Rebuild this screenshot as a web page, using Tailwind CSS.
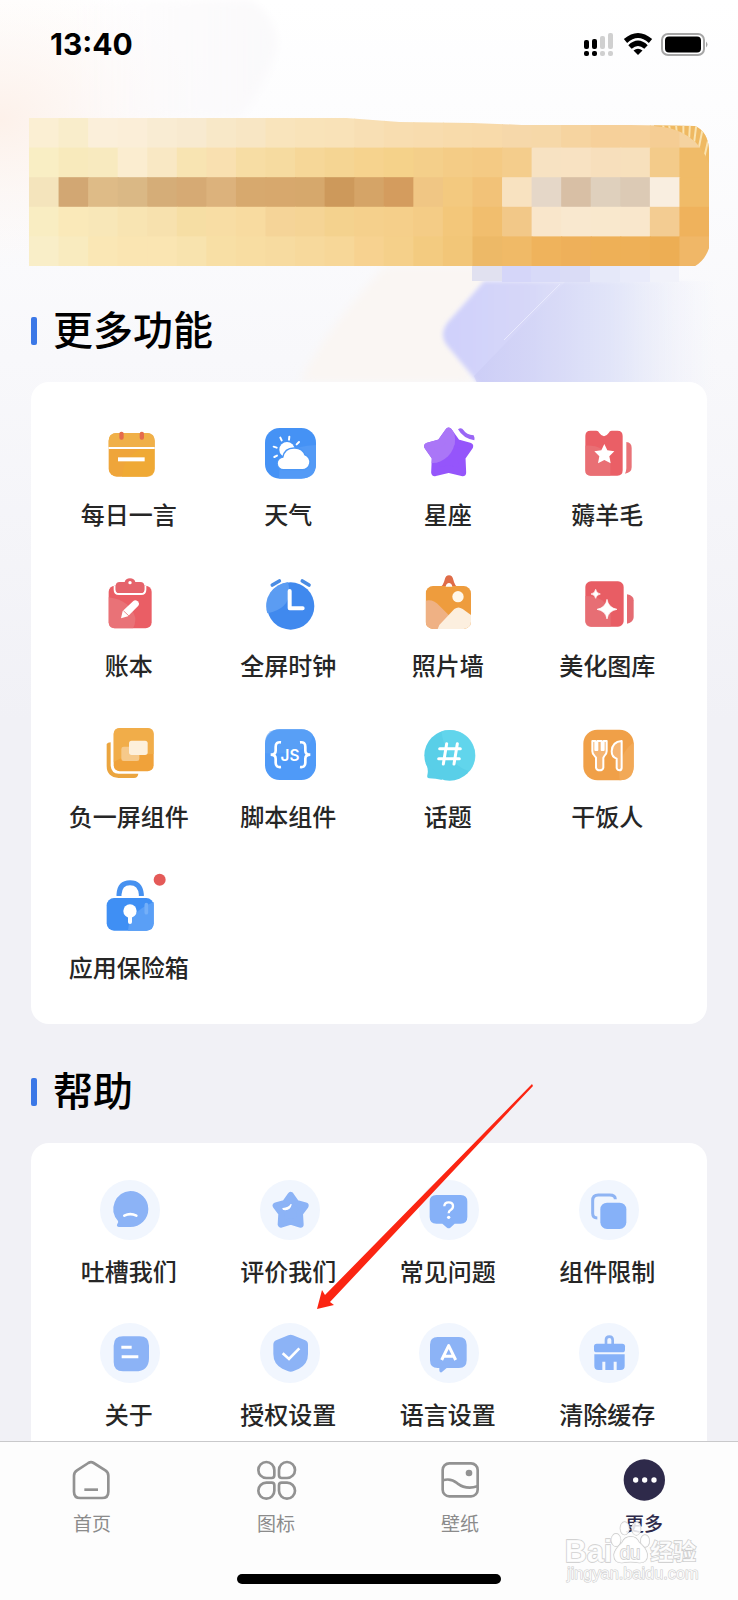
<!DOCTYPE html>
<html lang="zh-CN">
<head>
    <meta charset="UTF-8" />
    <meta name="viewport" content="width=device-width, initial-scale=1.0" />
    <script src="https://cdn.jsdelivr.net/npm/@tailwindcss/browser@4"></script>
    <title>更多</title>
</head>
<body class="relative h-screen flex flex-col overflow-hidden bg-[#f1f1f6] font-['Noto_Sans_CJK_SC',sans-serif] text-[#262626]">
    <main class="relative flex-1 min-h-0 overflow-y-auto [scrollbar-width:none] bg-linear-to-b from-white via-[#f8f8fb] via-25% to-[#f1f1f6] to-50%">

        <!-- background shapes -->
        <svg class="absolute top-0 left-0 w-full h-[420px]" viewBox="0 0 738 420" preserveAspectRatio="none" aria-hidden="true">
            <defs>
                <radialGradient id="bgPeach"><stop offset="0" stop-color="#fdf1ea"/><stop offset="1" stop-color="#fdf6f2" stop-opacity="0"/></radialGradient>
                <linearGradient id="bgLilac" x1="0" x2="1"><stop offset="0" stop-color="#fbf8fa" stop-opacity="0"/><stop offset="1" stop-color="#faf9fb"/></linearGradient>
                <linearGradient id="bgBlue" x1="0" x2="1"><stop offset="0" stop-color="#cfd0fb"/><stop offset=".3" stop-color="#d6d7f8"/><stop offset=".6" stop-color="#e4e7f9"/><stop offset="1" stop-color="#f6f7fb" stop-opacity="0"/></linearGradient>
                <linearGradient id="bgDeep" x1="0" x2="1"><stop offset="0" stop-color="#c9caf4"/><stop offset=".6" stop-color="#dfe3f8" stop-opacity=".7"/><stop offset="1" stop-color="#f0f2fa" stop-opacity="0"/></linearGradient>
                <filter id="soft"><feGaussianBlur stdDeviation="2"/></filter>
                <filter id="softer"><feGaussianBlur stdDeviation="5"/></filter>
            </defs>
            <ellipse cx="0" cy="120" rx="200" ry="150" fill="url(#bgPeach)"/>
            <path d="M60 0H250Q275 15 277 45Q270 80 240 118H60z" fill="url(#bgLilac)" filter="url(#softer)"/>
            <path d="M385 266H500L445 330L475 382H300Q325 330 385 266z" fill="#faf6f3" filter="url(#softer)"/>
            <path d="M484 281Q466 302 448 322Q437 336 450 349L484 390H720V281z" fill="url(#bgBlue)" filter="url(#soft)"/>
            <path d="M566 281L474 376L480 390H720V281z" fill="url(#bgDeep)" opacity=".6"/>
            <path d="M560 284L504 340" stroke="#e9eafd"/>
            <g>
                <rect x="472" y="265" width="30" height="16" fill="#e1e1f0"/>
                <rect x="502" y="265" width="29" height="17" fill="#d5d6f9"/>
                <rect x="531" y="265" width="29" height="17" fill="#d8daf8"/>
                <rect x="560" y="265" width="30" height="17" fill="#dadcf6"/>
                <rect x="590" y="265" width="30" height="17" fill="#e5e8f9"/>
                <rect x="620" y="265" width="30" height="17" fill="#e9ebfa"/>
                <rect x="650" y="265" width="29" height="17" fill="#f1f2fa"/>
            </g>
        </svg>

        <!-- status bar -->
        <header class="relative h-[118px] pl-[50px] pr-[30px] flex justify-between items-start">
            <time class="mt-[26px] font-['Inter',sans-serif] font-bold text-[30px] leading-9 text-black">13:40</time>
            <svg class="mt-[30px] w-[126px] h-[28px]" viewBox="0 0 126 28" role="img" aria-label="信号 Wi-Fi 电池">
                <rect x="2" y="10" width="5" height="9" rx="2"/>
                <rect x="10" y="9" width="5" height="10" rx="2"/>
                <rect x="18" y="6" width="5" height="13" rx="2" fill="#d0d0d0"/>
                <rect x="26" y="3" width="5" height="16" rx="2" fill="#d0d0d0"/>
                <rect x="2" y="21" width="5" height="5" rx="2"/>
                <rect x="10" y="21" width="5" height="5" rx="2"/>
                <rect x="18" y="21" width="5" height="5" rx="2" fill="#d0d0d0"/>
                <rect x="26" y="21" width="5" height="5" rx="2" fill="#d0d0d0"/>
                <g fill="none" stroke="#000" stroke-width="5">
                    <path d="M43.500 11Q56 0 68.500 11"/>
                    <path d="M48 17Q56 9.500 64 17"/>
                </g>
                <path d="M51.500 20.500Q56 17 60.500 20.500L56 25z"/>
                <rect x="80" y="4" width="42" height="21" rx="6" fill="none" stroke="#a6a6a6" stroke-width="2"/>
                <rect x="83" y="6.500" width="36" height="16" rx="4"/>
                <path d="M124 11.500q3 3 0 6z" fill="#a6a6a6"/>
            </svg>
        </header>

        <!-- banner -->
        <svg class="relative block ml-[29px] mr-[29px] w-[calc(100%-58px)] h-[148px]" viewBox="0 0 690 150" preserveAspectRatio="none" aria-hidden="true">
            <defs>
                <clipPath id="bannerClip"><path d="M0 0H322L376 4L450 5L500 7L610 7L676 8Q689 14 690 32V132Q686 144 676 150H0z"/></clipPath>
                <clipPath id="hatchClip"><path d="M634 0H690V46Q676 10 634 8z"/></clipPath>
            </defs>
            <g clip-path="url(#bannerClip)">
                <g id="mosaic"></g>
                <g clip-path="url(#hatchClip)">
                    <rect x="634" width="56" height="50" fill="#efb962"/>
                    <path d="M640 0l6 14M648 0l4 20M656 0l2 24M664 0l0 30M671 0l-2 36M678 0l-5 40M685 4l-9 44M692 10l-10 44" stroke="#fae3b0" stroke-width="2" fill="none"/>
                </g>
            </g>
        </svg>

        <section class="relative">
            <h2 class="mt-8 mb-6 pl-[31px] flex items-end gap-4 text-[40px] leading-[60px] font-medium text-black">
                <span class="mb-[13px] w-1.5 h-7 rounded-xs bg-[#3b78e7]"></span>更多功能
            </h2>
            <div class="mx-[31px] pt-[41px] pb-[39px] pl-[18px] pr-5 grid grid-cols-4 gap-y-[42px] rounded-[18px] bg-white text-2xl leading-9 font-medium">
                <a href="#" class="flex flex-col items-center gap-[13px]">
                    <svg class="ml-[3px] size-[60px]" viewBox="121 39 180 180">
                        <rect x="147" y="69" width="138" height="131" rx="24" fill="#efa53a"/>
                        <path d="M147 111V92q0-23 24-23h90q24 0 24 23v19z" fill="#f0b048"/>
                        <path d="M285 117v60q0 23-24 23h-74q4-65 60-83z" fill="#f0ab33" opacity=".7"/>
                        <path d="M147 114H285" stroke="#fff" stroke-width="6"/>
                        <rect x="179" y="65" width="13" height="24" rx="6" fill="#e56b4c"/>
                        <rect x="240" y="65" width="13" height="24" rx="6" fill="#e56b4c"/>
                        <path d="M175 148H255" stroke="#fff" stroke-width="12"/>
                    </svg>
                    每日一言
                </a>
                <a href="#" class="flex flex-col items-center gap-[13px]">
                    <svg class="ml-[3px] size-[60px]" viewBox="599 39 180 180">
                        <rect x="614" y="54" width="153" height="152" rx="44" fill="#4592f5"/>
                        <path d="M656 205q-2-98 111-100v56q0 44-44 44z" fill="#539af6"/>
                        <circle cx="680" cy="119" r="23" fill="#fff"/>
                        <path d="M660 83l4 8M687 80l-1 9M716 96l-7 7M640 110l9 3M642 141l8-4" stroke="#fff" stroke-width="6" stroke-linecap="round"/>
                        <path d="M670 177a17 17 0 0 1-1-34q5-28 34-27q23 1 29 20a21 21 0 0 1-7 41z" fill="#fff" stroke="#4c97f5" stroke-width="8" paint-order="stroke"/>
                    </svg>
                    天气
                </a>
                <a href="#" class="flex flex-col items-center gap-[13px]">
                    <svg class="ml-[3px] size-[60px]" viewBox="88 39 180 180">
                        <defs>
                            <path id="star" d="M177 65L201 99L239 109L216 142L218 187L177 177L136 187L138 142L115 109L153 99z"/>
                            <clipPath id="starGlow"><circle cx="124" cy="88" r="72"/></clipPath>
                        </defs>
                        <use href="#star" fill="#9555fb" stroke="#9555fb" stroke-width="23" stroke-linejoin="round"/>
                        <g clip-path="url(#starGlow)"><use href="#star" fill="#aa76f7" stroke="#aa76f7" stroke-width="23" stroke-linejoin="round"/></g>
                        <path d="M205 58q10-8 17 3q8 14 30 15q4 8 2 15q-34-6-49-33z" fill="#9a66f5" stroke="#fff" stroke-width="7" paint-order="stroke"/>
                    </svg>
                    星座
                </a>
                <a href="#" class="flex flex-col items-center gap-[13px]">
                    <svg class="ml-[3px] size-[60px]" viewBox="566 39 180 180">
                        <path d="M601 62h17q6 0 9 7q14 20 28 0q3-7 9-7h17q16 0 16 16v103q0 16-16 16h-80q-16 0-16-16V78q0-16 16-16z" fill="#ea5f66"/>
                        <path d="M585 107q55-3 75 41v49h-59q-16 0-16-16z" fill="#e8747a" opacity=".75"/>
                        <path d="M642 102l9 19l21 3l-15 15l4 21l-19-10l-19 10l4-21l-15-15l21-3z" fill="#fff"/>
                        <path d="M708 96q16 2 16 18v58q0 16-20 19q4-7 4-16z" fill="#e97378"/>
                    </svg>
                    薅羊毛
                </a>
                <a href="#" class="flex flex-col items-center gap-[13px]">
                    <svg class="ml-[3px] size-[60px]" viewBox="121 492 180 180">
                        <rect x="147" y="527" width="129" height="128" rx="18" fill="#ea5e65"/>
                        <path d="M147 562q65 8 80 62q0 20-7 31h-55q-18 0-18-18z" fill="#e9777c" opacity=".8"/>
                        <path d="M165 527v12q0 13 13 13h66q13 0 13-13v-12" fill="#e5636b" stroke="#fff" stroke-width="6"/>
                        <path d="M168 528q0-12 12-12h15q3-11 16-11t16 11h15q12 0 12 12v10q0 10-10 10h-66q-10 0-10-10z" fill="#e5636b"/>
                        <circle cx="211" cy="518" r="5" fill="#fff"/>
                        <path d="M184 625l5-22l32-30q6-5 13 1q7 7 2 13l-31 32z" fill="#fff"/>
                        <path d="M191 602l17 16" stroke="#ec8c90" stroke-width="3"/>
                    </svg>
                    账本
                </a>
                <a href="#" class="flex flex-col items-center gap-[13px]">
                    <svg class="ml-[3px] size-[60px]" viewBox="599 492 180 180">
                        <circle cx="691" cy="588" r="71" fill="#4089ee"/>
                        <path d="M621 610a71 71 0 0 1 62-93q20 76-62 93z" fill="#5b9cf2"/>
                        <path d="M636 525l21-12M726 513l20 12" stroke="#4a8ce3" stroke-width="11" stroke-linecap="round"/>
                        <path d="M688 543V595H727" fill="none" stroke="#fff" stroke-width="12" stroke-linecap="round" stroke-linejoin="round"/>
                    </svg>
                    全屏时钟
                </a>
                <a href="#" class="flex flex-col items-center gap-[13px]">
                    <svg class="ml-[3px] size-[60px]" viewBox="88 492 180 180">
                        <defs><clipPath id="photoClip"><rect x="108" y="528" width="136" height="129" rx="22"/></clipPath></defs>
                        <path d="M150 531q11-4 15-22q3-13 13-13t13 13q4 18 14 22z" fill="#df6c48"/>
                        <g clip-path="url(#photoClip)">
                            <rect x="108" y="528" width="136" height="129" fill="#ee9c3d"/>
                            <path d="M108 572q24-5 42 16l30 30l-30 40h-42z" fill="#efb184"/>
                            <path d="M144 657l5-12l45-48q12-9 25 0l26 19v41z" fill="#fcefdf"/>
                        </g>
                        <path d="M168 530q2-11 10-11t10 11z" fill="#fff"/>
                        <circle cx="205" cy="560" r="17" fill="#fff7ea"/>
                    </svg>
                    照片墙
                </a>
                <a href="#" class="flex flex-col items-center gap-[13px]">
                    <svg class="ml-[3px] size-[60px]" viewBox="566 492 180 180">
                        <rect x="585" y="514" width="115" height="136" rx="17" fill="#e85d64"/>
                        <path d="M585 558q62 0 76 52v40h-59q-17 0-17-17z" fill="#e7747a" opacity=".75"/>
                        <path d="M650 568q4 25 30 30q-26 5-30 29q-4-24-30-29q26-5 30-30zM616 538q2 12 14 14q-12 2-14 13q-2-11-14-13q12-2 14-14z" fill="#fff" stroke="#fff" stroke-width="2"/>
                        <path d="M710 553q20 4 20 18v50q0 16-20 20z" fill="#e56b72"/>
                    </svg>
                    美化图库
                </a>
                <a href="#" class="flex flex-col items-center gap-[13px]">
                    <svg class="ml-[3px] size-[60px]" viewBox="121 45 180 180">
                        <path d="M141 102q3-5 12-5v70q2 23 24 24h59q-2 13-13 13h-46q-36-3-36-36z" fill="#eba53f"/>
                        <rect x="162" y="54" width="120" height="130" rx="18" fill="#f0a23a"/>
                        <path d="M180 54h84q18 0 18 18v60q-90 0-120 25V72q0-18 18-18z" fill="#f1b04e" opacity=".8"/>
                        <rect x="185" y="110" width="54" height="43" rx="7" fill="#f6c98a"/>
                        <rect x="208" y="92" width="56" height="43" rx="8" fill="#fdf0dc"/>
                    </svg>
                    负一屏组件
                </a>
                <a href="#" class="flex flex-col items-center gap-[13px]">
                    <svg class="ml-[3px] size-[60px]" viewBox="599 45 180 180">
                        <rect x="614" y="58" width="153" height="152" rx="44" fill="#4f9af8"/>
                        <path d="M614 102q0-44 44-44h65q22 0 34 15q-3 65-143 57z" fill="#5ca1f5" opacity=".7"/>
                        <path d="M662 97q-16-2-16 13v12q0 12-15 12q15 0 15 12v12q0 15 16 13M719 97q16-2 16 13v12q0 12 15 12q-15 0-15 12v12q0 15-16 13" fill="none" stroke="#fff" stroke-width="8"/>
                        <text x="689" y="152" text-anchor="middle" font-family="Inter, sans-serif" font-weight="600" font-size="46" fill="#fff">JS</text>
                    </svg>
                    脚本组件
                </a>
                <a href="#" class="flex flex-col items-center gap-[13px]">
                    <svg class="ml-[3px] size-[60px]" viewBox="88 45 180 180">
                        <circle cx="180" cy="136" r="76" fill="#59cfe8"/>
                        <path d="M106 150q12 26 7 46q-2 9 5 9q20 0 40 5z" fill="#59cfe8"/>
                        <path d="M180 60a76 76 0 0 1 60 124q-70-20-85-120q12-4 25-4z" fill="#63d6ec" opacity=".8"/>
                        <path d="M171 101L161 162M203 101L193 162M150 116H212M147 146H209" stroke="#fff" stroke-width="9" stroke-linecap="round"/>
                    </svg>
                    话题
                </a>
                <a href="#" class="flex flex-col items-center gap-[13px]">
                    <svg class="ml-[3px] size-[60px]" viewBox="566 45 180 180">
                        <rect x="579" y="59" width="151" height="152" rx="42" fill="#f0a048"/>
                        <path d="M688 211q-8-76 42-114v72q0 42-42 42z" fill="#f2a957"/>
                        <path d="M606 93h9v27h6V93h13v27h6V93h9v31q0 9-7 14l-3 5v30q-2 8-11 8t-11-8v-30l-4-5q-7-5-7-14zM694 93q-29 2-30 31q0 17 15 22v28q2 7 8 7t7-7z" fill="#f5b573" stroke="#fff" stroke-width="6" stroke-linejoin="round"/>
                    </svg>
                    干饭人
                </a>
                <a href="#" class="flex flex-col items-center gap-[13px]">
                    <svg class="ml-[3px] size-[60px] overflow-visible" viewBox="121 498 180 180">
                        <path d="M178 558v-5q2-35 33-35t34 35v5" fill="none" stroke="#4691f0" stroke-width="15"/>
                        <rect x="141" y="564" width="141" height="98" rx="22" fill="#3f8ff4"/>
                        <path d="M205 662q2-55 77-86v64q0 22-22 22z" fill="#5a9ff6"/>
                        <path d="M260 584v24" stroke="#74aff8" stroke-width="11" stroke-linecap="round"/>
                        <circle cx="211" cy="603" r="20" fill="#fff"/>
                        <path d="M211 610v26" stroke="#fff" stroke-width="12" stroke-linecap="round"/>
                        <circle cx="300" cy="509" r="18" fill="#e45a58"/>
                    </svg>
                    应用保险箱
                </a>
            </div>
        </section>

        <section class="relative pt-[35px]">
            <h2 class="mb-6 pl-[31px] flex items-end gap-4 text-[40px] leading-[60px] font-medium text-black">
                <span class="mb-[13px] w-1.5 h-7 rounded-xs bg-[#3b78e7]"></span>帮助
            </h2>
            <div class="mx-[31px] pt-[37px] pb-[39px] pl-[18px] pr-5 grid grid-cols-4 gap-y-[34px] rounded-[18px] bg-white text-2xl leading-9 font-medium">
                <a href="#" class="flex flex-col items-center gap-[13px]">
                    <svg class="ml-[3px] size-[60px] rounded-full bg-[#f1f6fe]" viewBox="121 60 180 180">
                        <path d="M212 93a54 54 0 0 1 0 108h-35q-8-2-4-9q4-6 2-9A54 54 0 0 1 212 93z" fill="#8cb3f6"/>
                        <path d="M194 167q18-9 36 0" fill="none" stroke="#fff" stroke-width="8" stroke-linecap="round"/>
                    </svg>
                    吐槽我们
                </a>
                <a href="#" class="flex flex-col items-center gap-[13px]">
                    <svg class="ml-[3px] size-[60px] rounded-full bg-[#f1f6fe]" viewBox="599 60 180 180">
                        <path d="M691 106L708 130L735 137L718 160L720 193L691 184L662 193L664 160L647 137L674 130z" fill="#8cb3f6" stroke="#8cb3f6" stroke-width="20" stroke-linejoin="round"/>
                        <path d="M668 146q18-1 24-12q-3 14-17 15q-6 0-7-3z" fill="#fff" stroke="#fff" stroke-width="4" stroke-linejoin="round"/>
                    </svg>
                    评价我们
                </a>
                <a href="#" class="flex flex-col items-center gap-[13px]">
                    <svg class="ml-[3px] size-[60px] rounded-full bg-[#f1f6fe]" viewBox="88 60 180 180">
                        <path d="M140 105h73q20 0 20 20v46q0 20-20 20h-18l-13 12q-5 3-10 0l-14-12h-18q-20 0-20-20v-46q0-20 20-20z" fill="#86b1f8"/>
                        <path d="M164 139q0-12 13-12t13 11q0 8-7 12q-6 3-6 10" fill="none" stroke="#fff" stroke-width="7"/>
                        <circle cx="177" cy="172" r="5" fill="#fff"/>
                    </svg>
                    常见问题
                </a>
                <a href="#" class="flex flex-col items-center gap-[13px]">
                    <svg class="ml-[3px] size-[60px] rounded-full bg-[#f1f6fe]" viewBox="566 60 180 180">
                        <path d="M621 174q-14 0-14-14v-38q0-17 17-17h34q17 0 17 13" fill="none" stroke="#8fb4f3" stroke-width="9"/>
                        <rect x="630" y="128" width="78" height="79" rx="20" fill="#86b1f8"/>
                    </svg>
                    组件限制
                </a>
                <a href="#" class="flex flex-col items-center gap-[13px]">
                    <svg class="ml-[3px] size-[60px] rounded-full bg-[#f1f6fe]" viewBox="121 489 180 180">
                        <path d="M190 529h50q28 0 28 28v36q0 41-41 41h-37q-28 0-28-28v-49q0-28 28-28z" fill="#8cb3f6"/>
                        <path d="M185 562h31M186 590h50" stroke="#fff" stroke-width="9"/>
                    </svg>
                    关于
                </a>
                <a href="#" class="flex flex-col items-center gap-[13px]">
                    <svg class="ml-[3px] size-[60px] rounded-full bg-[#f1f6fe]" viewBox="599 489 180 180">
                        <path d="M684 526q7-4 14 0l35 14q10 4 10 14v28q0 30-27 44l-16 7q-9 4-18 0l-16-7q-27-14-27-44v-28q0-10 10-14z" fill="#8cb3f6"/>
                        <path d="M667 580l19 17l31-32" fill="none" stroke="#fff" stroke-width="8"/>
                    </svg>
                    授权设置
                </a>
                <a href="#" class="flex flex-col items-center gap-[13px]">
                    <svg class="ml-[3px] size-[60px] rounded-full bg-[#f1f6fe]" viewBox="88 489 180 180">
                        <path d="M144 531h64q23 0 23 23v47q0 23-23 23h-37l-15 13q-7 2-7-6v-7h-5q-23 0-23-23v-47q0-23 23-23z" fill="#8cb3f6"/>
                        <path d="M156 600l21-43l21 43M164 589h26" fill="none" stroke="#fff" stroke-width="9" stroke-linejoin="round"/>
                    </svg>
                    语言设置
                </a>
                <a href="#" class="flex flex-col items-center gap-[13px]">
                    <svg class="ml-[3px] size-[60px] rounded-full bg-[#f1f6fe]" viewBox="566 489 180 180">
                        <path d="M647 555v-15q0-10 10-10t10 10v15" fill="none" stroke="#8fb4f3" stroke-width="8"/>
                        <rect x="611" y="551" width="93" height="26" rx="8" fill="#86b1f8"/>
                        <path d="M612 583h91v35q0 12-12 12h-12v-25h-9v25h-25v-25h-9v25h-12q-12 0-12-12z" fill="#86b1f8"/>
                    </svg>
                    清除缓存
                </a>
            </div>
            <!-- pointer to the permission entry -->
            <svg class="absolute left-[315px] top-[60px] w-[220px] h-[228px] pointer-events-none" viewBox="315 1084 220 228" aria-hidden="true">
                <path d="M317 1309L322 1290L325 1295L532 1084L533 1086L330 1302L334 1305z" fill="#fb2512"/>
            </svg>
        </section>
    </main>

    <nav class="relative border-t border-[#c9c9cb] bg-[#fdfdfd] pt-[17px] pb-4">
        <div class="pr-0.5 grid grid-cols-4 text-[19px] leading-7 text-[#8b8b8b]">
            <a href="#" class="flex flex-col items-center gap-2">
                <svg class="size-[42px]" viewBox="213 87 126 126" fill="none" stroke="#929292" stroke-width="8">
                    <path d="M265 99q8-5 16 0l35 22q9 6 9 16v48q0 19-19 19h-65q-19 0-19-19v-48q0-10 9-16z"/>
                    <path d="M253 179h41"/>
                </svg>
                首页
            </a>
            <a href="#" class="flex flex-col items-center gap-2">
                <svg class="size-[42px]" viewBox="765 87 126 126" fill="none" stroke="#929292" stroke-width="8">
                    <path d="M799 96a24 24 0 0 1 24 24v16q0 8-8 8h-16a24 24 0 0 1 0-48z"/>
                    <path d="M861 96a24 24 0 0 0-24 24v16q0 8 8 8h16a24 24 0 0 0 0-48z"/>
                    <path d="M799 206a24 24 0 0 0 24-24v-16q0-8-8-8h-16a24 24 0 0 0 0 48z"/>
                    <path d="M861 206a24 24 0 0 1-24-24v-16q0-8 8-8h16a24 24 0 0 1 0 48z"/>
                </svg>
                图标
            </a>
            <a href="#" class="flex flex-col items-center gap-2">
                <svg class="size-[42px]" viewBox="213 87 126 126" fill="none" stroke="#929292" stroke-width="8">
                    <rect x="224" y="100" width="105" height="99" rx="20"/>
                    <path d="M225 151q23-8 43 9q26 20 60 9"/>
                    <circle cx="303" cy="129" r="10" fill="#929292" stroke="none"/>
                </svg>
                壁纸
            </a>
            <a href="#" class="flex flex-col items-center gap-2 font-medium text-[#2e2a4a]" aria-current="page">
                <svg class="size-[42px]" viewBox="765 87 126 126">
                    <circle cx="829" cy="150" r="62" fill="#2e2a4a"/>
                    <g fill="#fff"><circle cx="803" cy="150" r="8"/><circle cx="830" cy="150" r="8"/><circle cx="858" cy="150" r="8"/></g>
                </svg>
                更多
            </a>
        </div>
        <div class="mt-[37px] mx-auto w-[264px] h-2.5 rounded-full bg-black"></div>

        <!-- watermark -->
        <svg class="absolute right-[35px] bottom-3 w-[140px] h-[68px] pointer-events-none" viewBox="585 270 420 204" fill="#fff" fill-opacity=".85" stroke="#cbcbcb" stroke-width="4" paint-order="stroke" role="img" aria-label="Baidu 经验">
            <text x="590" y="396" font-family="Liberation Sans, sans-serif" font-weight="bold" font-size="92">Bai</text>
            <ellipse cx="744" cy="330" rx="14" ry="19"/>
            <ellipse cx="770" cy="295" rx="13" ry="19"/>
            <ellipse cx="805" cy="296" rx="13" ry="19"/>
            <ellipse cx="831" cy="333" rx="13" ry="18"/>
            <path d="M788 320q18 0 25 17q22 18 25 37q0 25-24 24q-26-5-52 0q-24 1-24-24q2-16 24-36q8-18 26-18z"/>
            <text x="755" y="388" font-family="Liberation Sans, sans-serif" font-size="56">du</text>
            <text x="847" y="389" font-family="Noto Sans CJK SC, sans-serif" font-weight="bold" font-size="69">经验</text>
            <text x="597" y="446" font-family="Liberation Sans, sans-serif" font-size="49" stroke-width="3">jingyan.baidu.com</text>
        </svg>
    </nav>

    <script>
        // banner tiles, one list of colours per row
        const tiles = [
            "fbefd3 f9edcb fbefda fbeed8 f9ecd3 f8ead0 f8e8c8 f8e6c4 f9e4bc f9e3b9 f9e2b8 f8dfb4 f8ddb0 f8dcae f8dbab f8daaa f6d8aa f6d8a8 f6d4a0 f6d09a f6d09a f5cd94 f5d3a0",
            "f9eec4 f8eabc f8eabf fbedd0 f9e8c4 f8e4b2 f9e0b0 f7dda4 f6dba0 f6d798 f5d593 f6d38e f5d28a f4cf8a f4cc86 f4ca84 f4cd8c f7e2c2 f8e2c2 f7dfbc f7e0bc f3cb8a f0bb68",
            "f4e4bc d2a773 debb87 dab885 d5ad78 d6aa74 dcb27c d7a96e d7a86d d6a86c cd995b d5a467 d49c5e f0c684 f3c97f f2c278 f8e2c0 e5d7c8 d8bfa5 dfd0bd dccab5 f9eee0 f0bb68",
            "f9edc2 fae9b9 f8e7b8 f8e4b2 f7e1ae f6dea4 f8dda4 f8dba0 f5d498 f5d495 f4d28e f5d08c f5cf8a f4cc86 f3c77a f1be6e f2c888 f9e6cb f9e8cf f9e8cd f9e7cc f3cc92 efb25c",
            "f9eec8 f9ebbf fae7b5 fae5b2 fae5b2 f8e3ae f8dfa5 f8dda2 f7dba0 f7d99c f7d798 f7d290 f5d08a f3cb80 f2c678 edb967 f0ba67 efb35c eeb05a eeb057 eeb057 edae54 f0b767"
        ];
        const mosaic = document.getElementById("mosaic");
        tiles.forEach((row, y) => {
            row.split(" ").forEach((color, x) => {
                const rect = document.createElementNS("http://www.w3.org/2000/svg", "rect");
                rect.setAttribute("x", x * 30);
                rect.setAttribute("y", y * 30);
                rect.setAttribute("width", 31);
                rect.setAttribute("height", 31);
                rect.setAttribute("fill", "#" + color);
                mosaic.appendChild(rect);
            });
        });
    </script>
</body>
</html>
